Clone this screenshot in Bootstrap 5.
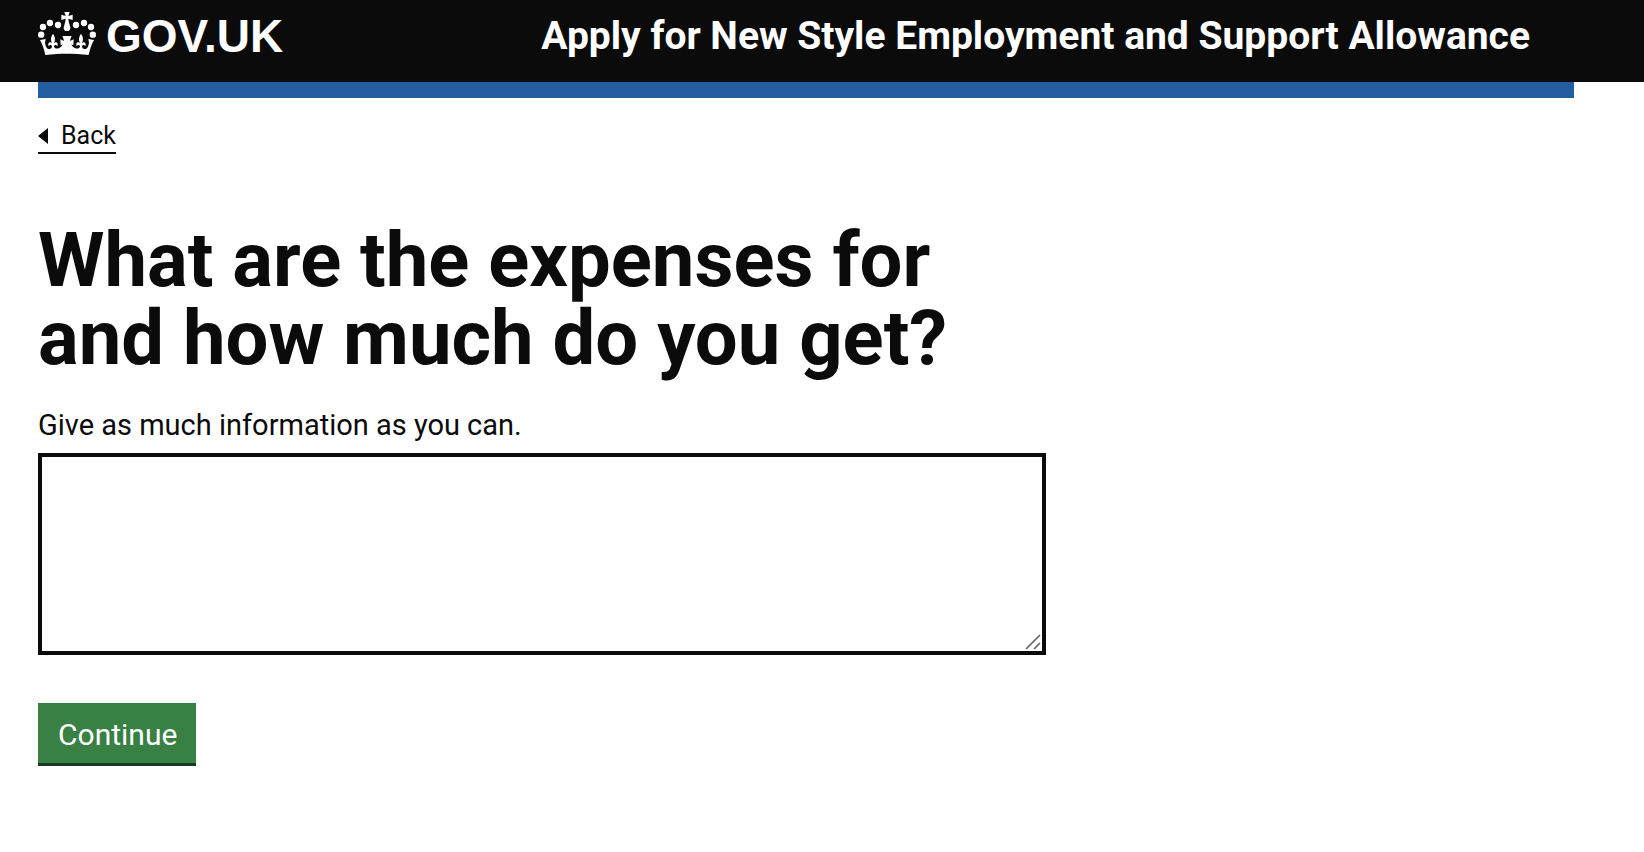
<!DOCTYPE html>
<html lang="en">
<head>
<meta charset="utf-8">
<meta name="viewport" content="width=device-width, initial-scale=1">
<title>What are the expenses for and how much do you get? - GOV.UK</title>
<link href="https://cdn.jsdelivr.net/npm/bootstrap@5.3.0/dist/css/bootstrap.min.css" rel="stylesheet">
<style>
  body { font-family: Roboto, "Liberation Sans", sans-serif; color: #0b0b0c; font-size: 29px; line-height: 40px; }
  .page-width { padding-left: 38px; padding-right: 70px; }
  .site-header { background: #0b0b0c; height: 82px; }
  .site-logo { font-family: "Liberation Sans", Arial, sans-serif; font-size: 46px; line-height: 70px; gap: 10px; }
  .site-logo svg { width: 58px; height: 44px; margin-bottom: 4px; }
  .service-name { font-size: 39px; line-height: 72px; padding-right: 44px; }
  .phase-bar { background: #235fa0; height: 16px; }
  .back-link { font-size: 25px; line-height: 32px; border-bottom: 2px solid #0b0b0c; color: #0b0b0c; gap: 13px; margin-top: 22px; }
  .question-row { --bs-gutter-x: 48px; margin-top: 67px; }
  .question { font-size: 76px; line-height: 78px; margin-bottom: 28px; }
  .answer { border: 4px solid #0b0b0c; border-radius: 0; height: 202px; resize: none; font-size: 29px; }
  .answer:focus { border-color: #0b0b0c; box-shadow: 0 0 0 5px #fd0; }
  .grip { right: 5px; bottom: 5px; width: 16px; height: 16px; }
  .btn-continue { background: #388043; color: #fff; font-size: 30px; line-height: 40px; padding: 12px 19px 8px 20px; border: 0; border-bottom: 3px solid #183a22; border-radius: 0; margin-top: 48px; }
  .btn-continue:hover { background: #2c6636; color: #fff; border-color: #183a22; }
</style>
</head>
<body>
<header class="site-header page-width text-white">
  <div class="d-flex justify-content-between">
    <a href="#" class="site-logo d-flex align-items-center fw-bold text-white text-decoration-none">
      <svg viewBox="24 36 174 132" fill="currentColor" aria-hidden="true">
        <g id="crown-half">
          <circle cx="33.500" cy="104" r="9.500"/><circle cx="39" cy="81" r="9.500"/><circle cx="60" cy="69" r="9.500"/><circle cx="84" cy="75" r="9.500"/>
          <path d="M30 120L47 117L45 128C46 138 50 146 56 147C62 147 65 144 66 140C65 134 59 134 56 139C52 131 58 123 66 129C61 119 62 111 69 101C76 111 77 119 72 129C80 123 86 131 82 139C79 134 73 134 72 140C74 145 80 147 86 145C92 143 96 139 98 133L92 136L91 118L102 123C101 117 99 113 97 108L112 108L112 161C90 161 68 162 46 165C42 147 37 133 30 120z"/>
        </g>
        <use href="#crown-half" transform="translate(222) scale(-1 1)"/>
        <path d="M103 36h16l-4 12 13-4v16l-13-4 1 8 5 19a10 10 0 1 1-20 0l5-19 1-8-13 4V44l13 4z"/>
      </svg>
      <span>GOV.UK</span>
    </a>
    <a href="#" class="service-name fw-bold text-white text-decoration-none">Apply for New Style Employment and Support Allowance</a>
  </div>
</header>
<div class="page-width">
  <div class="phase-bar"></div>
  <a href="#" class="back-link d-inline-flex align-items-center text-decoration-none">
    <svg width="10" height="16" viewBox="0 0 10 16" fill="currentColor" aria-hidden="true"><path d="M0 8 10 0v16z"/></svg>
    <span>Back</span>
  </a>
  <main>
    <div class="row question-row">
      <form class="col-8">
        <h1 class="question fw-bold">What are the expenses for and how much do you get?</h1>
        <label for="expenses" class="d-block mb-2">Give as much information as you can.</label>
        <div class="position-relative">
          <textarea id="expenses" class="form-control answer"></textarea>
          <svg class="grip position-absolute pe-none" viewBox="0 0 16 16" stroke="#636363" stroke-width="1.600" fill="none" aria-hidden="true"><path d="M1 15 15 1M9 15l6-6"/></svg>
        </div>
        <button type="submit" class="btn btn-continue">Continue</button>
      </form>
    </div>
  </main>
</div>
<script src="https://cdn.jsdelivr.net/npm/bootstrap@5.3.0/dist/js/bootstrap.bundle.min.js"></script>
</body>
</html>
